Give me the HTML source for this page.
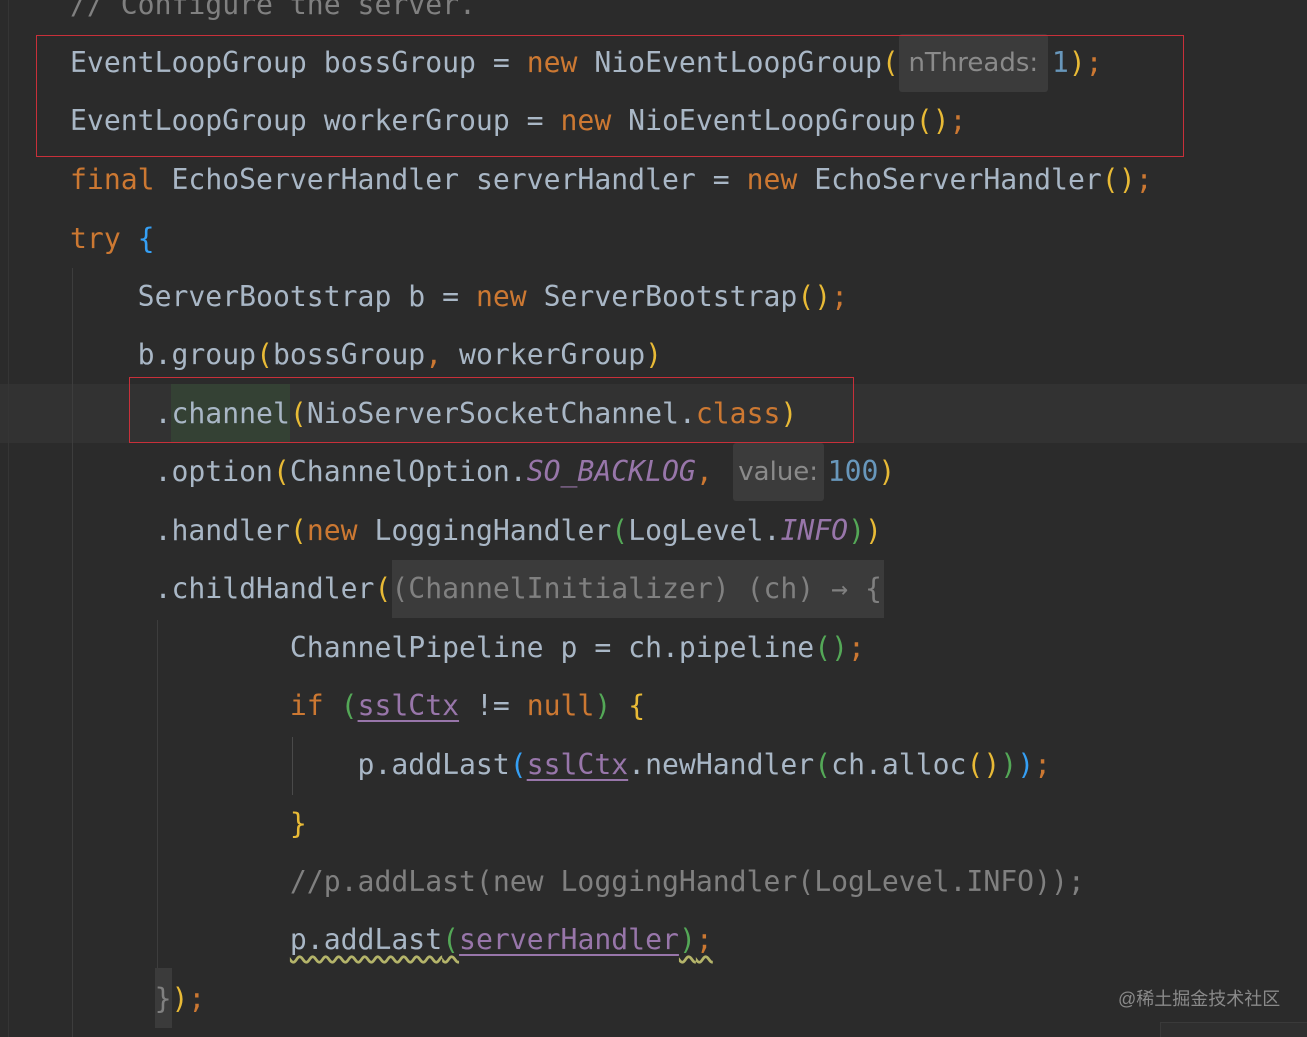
<!DOCTYPE html>
<html><head><meta charset="utf-8"><style>
html,body{margin:0;padding:0;background:#2b2b2b;width:1307px;height:1037px;overflow:hidden;position:relative}
.l{position:absolute;left:70px;white-space:pre;font-family:"DejaVu Sans Mono","Liberation Mono",monospace;font-size:28.1px;line-height:40px;height:40px;color:#a9b7c6}
.k{color:#cc7832}.n{color:#6897bb}.s{color:#9876aa;font-style:italic}.c{color:#808080}
.y{color:#e8ba36}.g{color:#54a857}.b{color:#359ff4}.f{color:#9876aa;text-decoration:underline;text-decoration-thickness:2px;text-underline-offset:5px}
.h{display:inline-block;background:#3b3b3b;color:#8a8a8a;font-family:"DejaVu Sans","Liberation Sans",sans-serif;font-size:26px;border-radius:3px;text-align:center;height:58px;line-height:58px;vertical-align:top;margin-top:-9px;margin-right:4px}
.r{position:absolute;border:1px solid #c8303a}
.v{position:absolute;width:1px;background:#3d3d3d}
</style></head><body>
<div style="position:absolute;left:0;top:384px;width:1307px;height:59px;background:#323232"></div>
<div style="position:absolute;left:171px;top:384px;width:119px;height:59px;background:#344134"></div>
<div style="position:absolute;left:392px;top:560px;width:492px;height:58px;background:#3b3b3b"></div>
<div style="position:absolute;left:155px;top:968px;width:17px;height:60px;background:#3b3b3b"></div>
<div class="v" style="left:8px;top:0;height:1037px;background:#353535"></div>
<div class="v" style="left:72px;top:268px;height:769px"></div>
<div class="v" style="left:157px;top:620px;height:348px"></div>
<div class="v" style="left:292px;top:737px;height:58px;background:#4a4a4a"></div>

<div class="l c" style="top:-15px">// Configure the server.</div>
<div class="l" style="top:43px">EventLoopGroup bossGroup = <span class="k">new</span> NioEventLoopGroup<span class="y">(</span><span class="h" style="width:149px">nThreads:</span><span class="n">1</span><span class="y">)</span><span class="k">;</span></div>
<div class="l" style="top:101px">EventLoopGroup workerGroup = <span class="k">new</span> NioEventLoopGroup<span class="y">()</span><span class="k">;</span></div>
<div class="l" style="top:160px"><span class="k">final</span> EchoServerHandler serverHandler = <span class="k">new</span> EchoServerHandler<span class="y">()</span><span class="k">;</span></div>
<div class="l" style="top:219px"><span class="k">try</span> <span class="b">{</span></div>
<div class="l" style="top:277px">    ServerBootstrap b = <span class="k">new</span> ServerBootstrap<span class="y">()</span><span class="k">;</span></div>
<div class="l" style="top:335px">    b.group<span class="y">(</span>bossGroup<span class="k">,</span> workerGroup<span class="y">)</span></div>
<div class="l" style="top:394px">     .channel<span class="y">(</span>NioServerSocketChannel.<span class="k">class</span><span class="y">)</span></div>
<div class="l" style="top:452px">     .option<span class="y">(</span>ChannelOption.<span class="s">SO_BACKLOG</span><span class="k">,</span> <span class="h" style="width:91px;margin-left:3px">value:</span><span class="n">100</span><span class="y">)</span></div>
<div class="l" style="top:511px">     .handler<span class="y">(</span><span class="k">new</span> LoggingHandler<span class="g">(</span>LogLevel.<span class="s">INFO</span><span class="g">)</span><span class="y">)</span></div>
<div class="l" style="top:569px">     .childHandler<span class="y">(</span><span class="c">(ChannelInitializer) (ch) → {</span></div>
<div class="l" style="top:628px">             ChannelPipeline p = ch.pipeline<span class="g">()</span><span class="k">;</span></div>
<div class="l" style="top:686px">             <span class="k">if</span> <span class="g">(</span><span class="f">sslCtx</span> != <span class="k">null</span><span class="g">)</span> <span class="y">{</span></div>
<div class="l" style="top:745px">                 p.addLast<span class="b">(</span><span class="f">sslCtx</span>.newHandler<span class="g">(</span>ch.alloc<span class="y">()</span><span class="g">)</span><span class="b">)</span><span class="k">;</span></div>
<div class="l" style="top:804px">             <span class="y">}</span></div>
<div class="l c" style="top:862px">             //p.addLast(new LoggingHandler(LogLevel.INFO));</div>
<div class="l" style="top:920px">             <span style="text-decoration:underline wavy #b4b46a;text-underline-offset:6px">p.addLast<span class="g">(</span></span><span class="f">serverHandler</span><span style="text-decoration:underline wavy #b4b46a;text-underline-offset:6px"><span class="g">)</span><span class="k">;</span></span></div>
<div class="l" style="top:979px">     <span class="c">}</span><span class="y">)</span><span class="k">;</span></div>

<div class="r" style="left:36px;top:35px;width:1146px;height:120px"></div>
<div class="r" style="left:129px;top:377px;width:723px;height:64px"></div>
<div style="position:absolute;left:1118px;top:985px;font-family:'Liberation Sans','Noto Sans CJK SC',sans-serif;font-size:18px;color:#8a8a8a">@稀土掘金技术社区</div>
<div style="position:absolute;left:1160px;top:1022px;width:147px;height:15px;background:#2f2f2f;border-top:1px solid #3a3a3a;border-left:1px solid #3a3a3a"></div>
</body></html>
